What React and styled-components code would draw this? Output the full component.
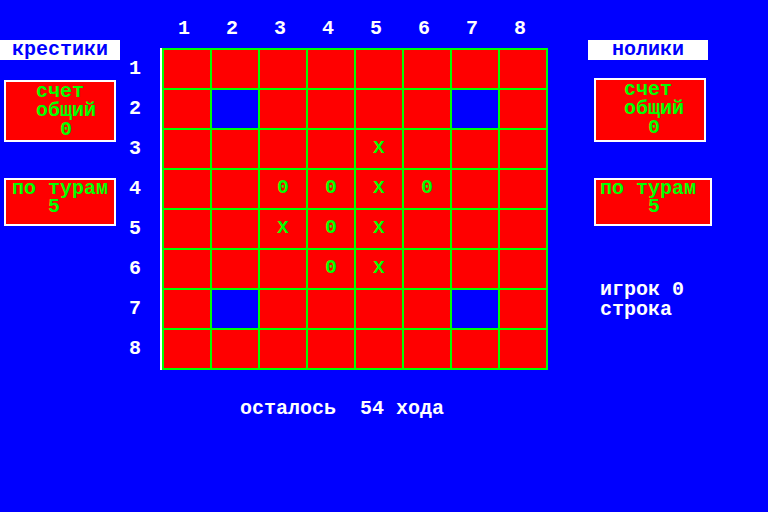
import React from "react";
import styled, { createGlobalStyle } from "styled-components";

const BLUE = "#0000ff";
const RED = "#ff0000";
const GREEN = "#00ff00";
const WHITE = "#ffffff";

const GlobalStyle = createGlobalStyle`
  html, body {
    margin: 0;
    padding: 0;
    background: ${BLUE};
  }
  body {
    font-family: "Liberation Mono", "DejaVu Sans Mono", monospace;
    font-weight: bold;
    font-size: 20px;
  }
`;

const Screen = styled.div`
  width: 768px;
  height: 512px;
  background: ${BLUE};
  display: flex;
  align-items: flex-start;
  overflow: hidden;
  color: ${WHITE};
  line-height: 20px;
`;

const SidePanel = styled.div`
  display: flex;
  flex-direction: column;
  align-items: flex-start;
  padding-top: 40px;
  width: ${({ $width }) => $width}px;
  flex-shrink: 0;
`;

const NameTag = styled.div`
  width: 120px;
  height: 20px;
  background: ${WHITE};
  color: ${BLUE};
  text-align: center;
  line-height: 20px;
`;

const RedBox = styled.div`
  box-sizing: border-box;
  background: ${RED};
  border: 2px solid ${WHITE};
  color: ${GREEN};
  white-space: pre;
  line-height: ${({ $lh }) => $lh}px;
  margin-left: ${({ $left }) => $left}px;
  margin-top: ${({ $top }) => $top}px;
  width: ${({ $width }) => $width}px;
  height: ${({ $height }) => $height}px;
  padding-left: ${({ $pad }) => $pad}px;
`;

const Info = styled.div`
  margin-top: 54px;
  padding-left: 12px;
  white-space: pre;
  line-height: 20px;
`;

const Center = styled.div`
  width: 464px;
  flex-shrink: 0;
  display: flex;
  flex-direction: column;
`;

const Header = styled.div`
  height: 48px;
  padding-left: 36px;
  display: grid;
  grid-template-columns: repeat(8, 48px);
  align-items: start;
`;

const ColNum = styled.div`
  margin-top: 19px;
  text-align: center;
`;

const BoardRow = styled.div`
  display: flex;
`;

const RowLabels = styled.div`
  width: 36px;
  display: grid;
  grid-template-rows: repeat(8, 40px);
  padding-top: 1px;
`;

const RowNum = styled.div`
  display: flex;
  align-items: center;
  padding-left: 5px;
`;

const Board = styled.div`
  border-left: 2px solid ${WHITE};
  background: ${GREEN};
  padding: 2px;
  display: grid;
  grid-template-columns: repeat(8, 46px);
  grid-template-rows: repeat(8, 38px);
  gap: 2px;
`;

const Cell = styled.div`
  background: ${({ $hole }) => ($hole ? BLUE : RED)};
  color: ${GREEN};
  display: flex;
  align-items: center;
  justify-content: center;
  font-size: ${({ $mark }) => ($mark === "X" ? "19px" : "20px")};
  padding-bottom: 3px;
  box-sizing: border-box;
`;

const Footer = styled.div`
  margin-top: 29px;
  padding-left: 116px;
  white-space: pre;
`;

const holes = ["1-1", "1-6", "6-1", "6-6"];
const marks = {
  "2-4": "X",
  "3-2": "0",
  "3-3": "0",
  "3-4": "X",
  "3-5": "0",
  "4-2": "X",
  "4-3": "0",
  "4-4": "X",
  "5-3": "0",
  "5-4": "X",
};

const nums = [1, 2, 3, 4, 5, 6, 7, 8];

export default function App() {
  return (
    <>
      <GlobalStyle />
      <Screen>
        <SidePanel $width={124}>
          <NameTag>крестики</NameTag>
          <RedBox $left={4} $top={20} $width={112} $height={62} $pad={30} $lh={19}>
            {"счет\nобщий\n  0"}
          </RedBox>
          <RedBox $left={4} $top={36} $width={112} $height={48} $pad={6} $lh={18}>
            {"по турам\n   5"}
          </RedBox>
        </SidePanel>

        <Center>
          <Header>
            {nums.map((n) => (
              <ColNum key={n}>{n}</ColNum>
            ))}
          </Header>
          <BoardRow>
            <RowLabels>
              {nums.map((n) => (
                <RowNum key={n}>{n}</RowNum>
              ))}
            </RowLabels>
            <Board>
              {nums.map((_, r) =>
                nums.map((_, c) => {
                  const key = `${r}-${c}`;
                  const mark = marks[key];
                  return (
                    <Cell key={key} $hole={holes.includes(key)} $mark={mark}>
                      {mark}
                    </Cell>
                  );
                })
              )}
            </Board>
          </BoardRow>
          <Footer>{"осталось  54 хода"}</Footer>
        </Center>

        <SidePanel $width={180}>
          <NameTag>нолики</NameTag>
          <RedBox $left={6} $top={18} $width={112} $height={64} $pad={28} $lh={19}>
            {"счет\nобщий\n  0"}
          </RedBox>
          <RedBox $left={6} $top={36} $width={118} $height={48} $pad={4} $lh={18}>
            {"по турам\n    5"}
          </RedBox>
          <Info>{"игрок 0\nстрока"}</Info>
        </SidePanel>
      </Screen>
    </>
  );
}
